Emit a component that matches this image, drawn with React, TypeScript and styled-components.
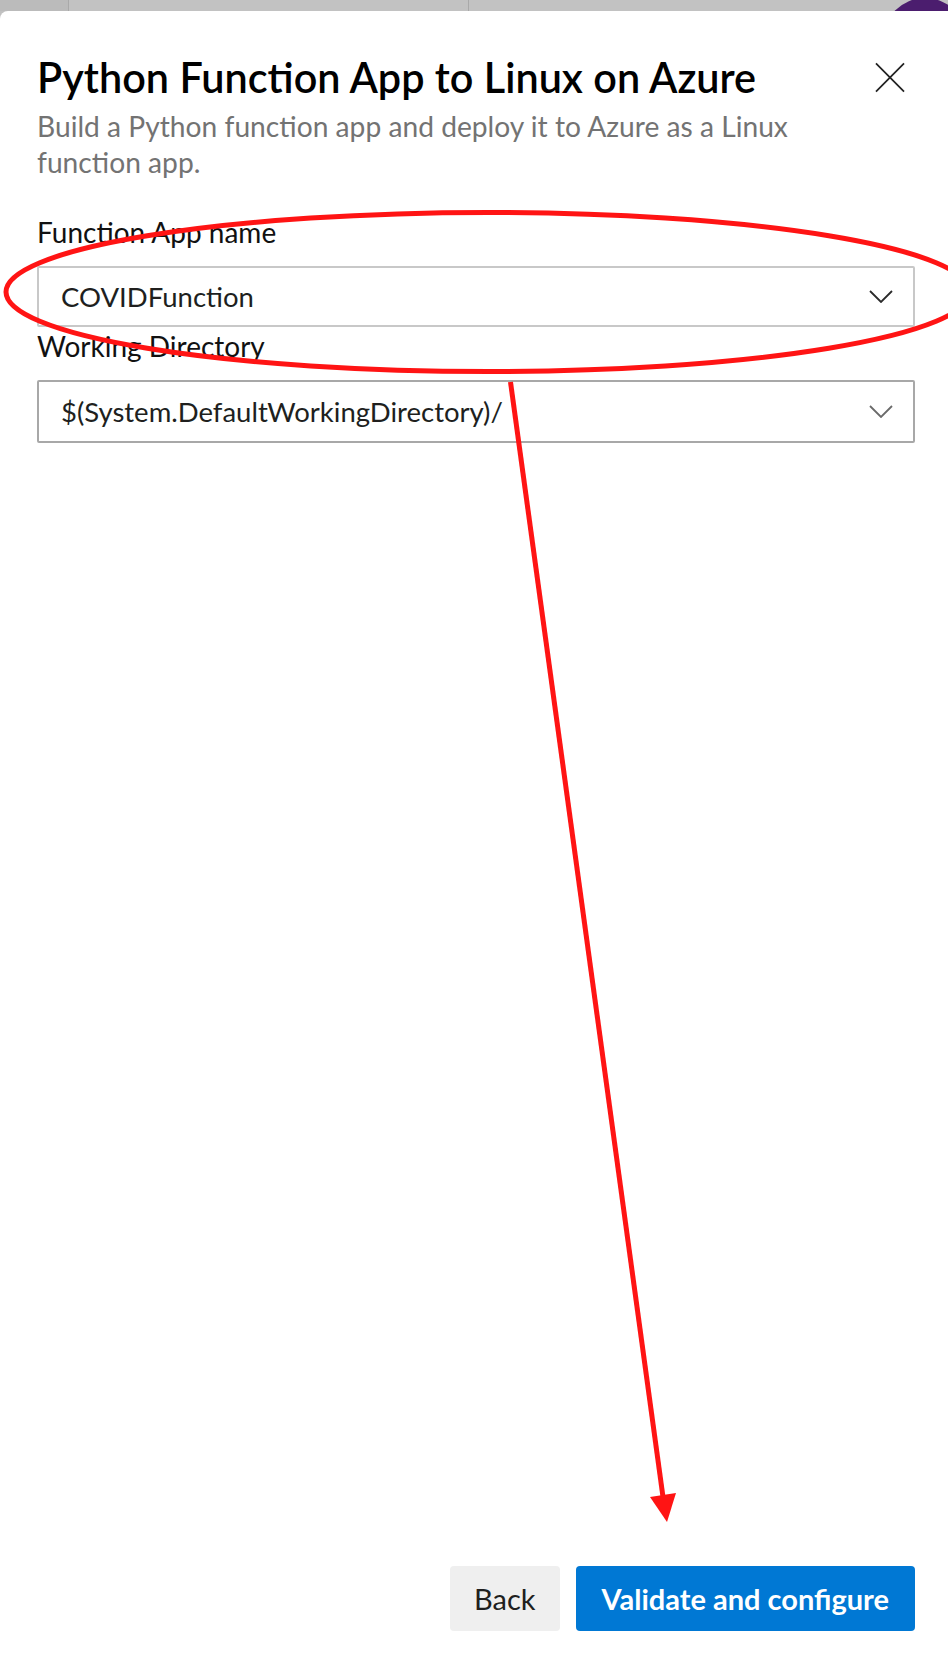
import styled, { createGlobalStyle } from "styled-components";

const GlobalStyle = createGlobalStyle`
  html, body {
    margin: 0;
    padding: 0;
    background: #ffffff;
  }
  body {
    font-family: Lato, "Open Sans", sans-serif;
    color: #201f1e;
  }
`;

const Page = styled.div`
  position: relative;
  width: 948px;
  height: 1656px;
  display: flex;
  flex-direction: column;
  overflow: hidden;
  background: #c1c1c1;
`;

const TopBar = styled.div`
  height: 11px;
  display: flex;
  flex-shrink: 0;
  overflow: hidden;
`;

const BarSegment = styled.div<{ $width?: number; $shade: string }>`
  width: ${(p) => (p.$width ? `${p.$width}px` : "auto")};
  flex: ${(p) => (p.$width ? "none" : "1")};
  background: ${(p) => p.$shade};
  border-right: 1px solid #a9a9a9;
`;

const Avatar = styled.div`
  width: 84px;
  height: 84px;
  border-radius: 50%;
  background: #4b1d6e;
  flex: none;
  margin: -2px -19px 0 -29px;
`;

const Panel = styled.div`
  flex: 1;
  display: flex;
  flex-direction: column;
  background: #ffffff;
  border-top-left-radius: 8px;
  padding: 41px 33px 25px 37px;
`;

const Header = styled.div`
  display: flex;
  align-items: center;
  justify-content: space-between;
`;

const Title = styled.h1`
  margin: 0;
  font-family: Lato, "Open Sans", sans-serif;
  font-size: 41.4px;
  line-height: 50px;
  font-weight: 600;
  color: #000000;
`;

const CloseButton = styled.button`
  border: none;
  background: transparent;
  padding: 0;
  margin-right: 10px;
  width: 30px;
  height: 31px;
  display: flex;
  align-items: center;
  justify-content: center;
  cursor: pointer;
`;

const Subtitle = styled.p`
  margin: 6px 0 0;
  max-width: 810px;
  font-size: 28.2px;
  line-height: 36px;
  color: #737373;
`;

const Field = styled.div<{ $gap: number }>`
  display: flex;
  flex-direction: column;
  margin-top: ${(p) => p.$gap}px;
`;

const Label = styled.label`
  font-size: 28px;
  line-height: 36px;
  color: #111111;
`;

const Dropdown = styled.div<{ $border: string; $height: number }>`
  margin-top: 16px;
  height: ${(p) => p.$height}px;
  box-sizing: border-box;
  border: 2px solid ${(p) => p.$border};
  border-radius: 2px;
  display: flex;
  align-items: center;
  justify-content: space-between;
  padding: 0 20px 0 22px;
  font-size: 27.5px;
  color: #201f1e;
`;

const Footer = styled.div`
  margin-top: auto;
  display: flex;
  justify-content: flex-end;
  gap: 16px;
`;

const Button = styled.button<{ $primary?: boolean }>`
  height: 65px;
  padding: 0 ${(p) => (p.$primary ? 26 : 24)}px;
  border: none;
  border-radius: 4px;
  font-family: Lato, "Open Sans", sans-serif;
  font-size: 29px;
  font-weight: ${(p) => (p.$primary ? 700 : 400)};
  background: ${(p) => (p.$primary ? "#0078d4" : "#efefef")};
  color: ${(p) => (p.$primary ? "#ffffff" : "#201f1e")};
  cursor: pointer;
`;

const Annotation = styled.svg`
  position: absolute;
  top: 0;
  left: 0;
  pointer-events: none;
`;

const Chevron = ({ color }: { color: string }) => (
  <svg width="24" height="13" viewBox="0 0 24 13">
    <polyline points="1,1 12,12 23,1" fill="none" stroke={color} strokeWidth="1.8" />
  </svg>
);

export default function App() {
  return (
    <>
      <GlobalStyle />
      <Page>
        <TopBar>
          <BarSegment $width={68} $shade="#bbbbbb" />
          <BarSegment $width={399} $shade="#c2c2c2" />
          <BarSegment $shade="#c2c2c2" />
          <Avatar />
        </TopBar>
        <Panel>
          <Header>
            <Title>Python Function App to Linux on Azure</Title>
            <CloseButton aria-label="Close">
              <svg width="31" height="31" viewBox="0 0 31 31">
                <path d="M1 1 L30 30 M30 1 L1 30" stroke="#222" strokeWidth="1.8" />
              </svg>
            </CloseButton>
          </Header>
          <Subtitle>
            Build a Python function app and deploy it to Azure as a Linux function app.
          </Subtitle>

          <Field $gap={34}>
            <Label>Function App name</Label>
            <Dropdown $border="#c8c8c8" $height={61}>
              <span>COVIDFunction</span>
              <Chevron color="#2b2b2b" />
            </Dropdown>
          </Field>

          <Field $gap={1}>
            <Label>Working Directory</Label>
            <Dropdown $border="#a8a8a8" $height={63}>
              <span>$(System.DefaultWorkingDirectory)/</span>
              <Chevron color="#6a6a6a" />
            </Dropdown>
          </Field>

          <Footer>
            <Button>Back</Button>
            <Button $primary>Validate and configure</Button>
          </Footer>
        </Panel>

        <Annotation width="948" height="1656" viewBox="0 0 948 1656">
          <ellipse cx="488" cy="292" rx="482" ry="79.5" fill="none" stroke="#ff1414" strokeWidth="5" />
          <line x1="510.5" y1="382" x2="663" y2="1497" stroke="#ff1414" strokeWidth="5" />
          <polygon points="650,1497 676,1493 667,1522" fill="#ff1414" />
        </Annotation>
      </Page>
    </>
  );
}
